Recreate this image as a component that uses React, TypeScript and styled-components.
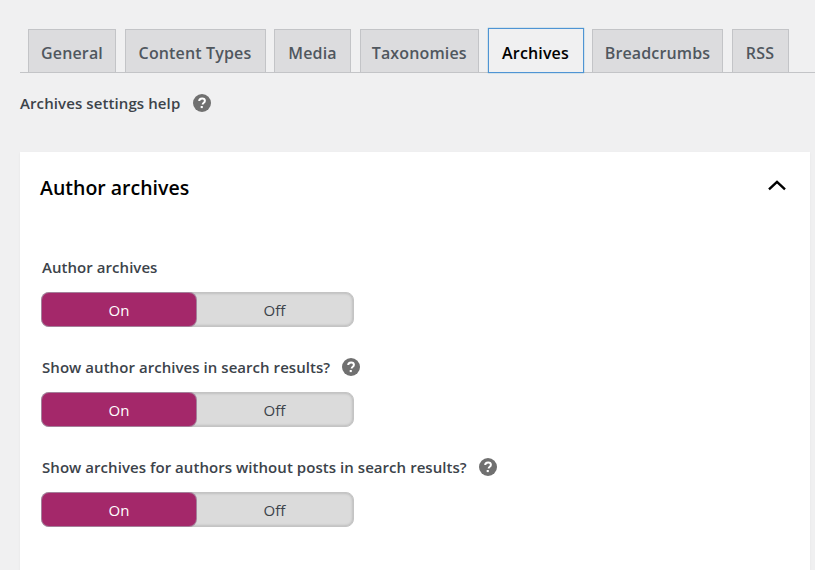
import React from "react";
import styled, { createGlobalStyle } from "styled-components";

const GlobalStyle = createGlobalStyle`
  html, body {
    margin: 0;
    padding: 0;
    background: #f0f0f1;
    overflow: hidden;
  }
  body {
    font-family: "Open Sans", "Noto Sans", "Liberation Sans", sans-serif;
  }
`;

const Page = styled.div`
  width: 815px;
  height: 570px;
  padding: 29px 5px 0 20px;
  box-sizing: border-box;
  overflow: hidden;
`;

const TabBar = styled.nav`
  display: flex;
  gap: 8.5px;
  padding-left: 8px;
  margin-right: -5px;
  height: 44px;
  box-sizing: border-box;
  border-bottom: 1px solid #c3c4c7;
`;

const Tab = styled.a<{ $active?: boolean; $width: number }>`
  display: flex;
  align-items: center;
  justify-content: center;
  box-sizing: border-box;
  width: ${(p) => p.$width}px;
  height: ${(p) => (p.$active ? 45 : 43)}px;
  margin-top: ${(p) => (p.$active ? -1 : 0)}px;
  padding-top: ${(p) => (p.$active ? 4 : 3)}px;
  font-size: 16px;
  font-weight: 600;
  letter-spacing: 0.15px;
  color: ${(p) => (p.$active ? "#000" : "#50575e")};
  background: ${(p) => (p.$active ? "#f0f0f1" : "#dcdcde")};
  border: 1px solid ${(p) => (p.$active ? "#4f94d4" : "#c3c4c7")};
  border-bottom: ${(p) => (p.$active ? "1px solid #4f94d4" : "none")};
  box-shadow: ${(p) => (p.$active ? "0 0 1px rgba(30, 140, 190, 0.8)" : "none")};
`;

const HelpRow = styled.div`
  display: flex;
  align-items: center;
  gap: 13px;
  height: 20px;
  margin-top: 20px;
  font-size: 15px;
  font-weight: 600;
  letter-spacing: 0.1px;
  color: #3c434a;
`;

const HelpIcon = styled.svg`
  width: 18px;
  height: 18px;
  flex-shrink: 0;
`;

const Card = styled.section`
  margin-top: 39px;
  height: 430px;
  padding: 0 20px;
  background: #fff;
  box-shadow: 0 1px 2px rgba(0, 0, 0, 0.06);
`;

const CardHeader = styled.header`
  display: flex;
  align-items: center;
  justify-content: space-between;
  height: 72px;
  padding-right: 3px;
`;

const CardTitle = styled.h2`
  margin: 0 0 2px;
  font-size: 19.5px;
  font-weight: 600;
  color: #000;
`;

const Chevron = styled.svg`
  width: 20px;
  height: 12px;
  margin-bottom: 6px;
`;

const Fields = styled.div`
  display: flex;
  flex-direction: column;
  gap: 30px;
  padding: 33px 0 0 1px;
`;

const Field = styled.div`
  display: flex;
  flex-direction: column;
  gap: 15px;
`;

const FieldLabel = styled.div`
  display: flex;
  align-items: center;
  gap: 12px;
  height: 20px;
  margin-left: 1px;
  font-size: 15px;
  font-weight: 600;
  letter-spacing: 0.05px;
  color: #3c434a;
`;

const Toggle = styled.div`
  display: flex;
  width: 313px;
  height: 35px;
  box-sizing: border-box;
  border: 1px solid #c4c4c4;
  border-radius: 8px;
  background: #dbdbdb;
  box-shadow: inset 0 0 3px rgba(0, 0, 0, 0.25);
`;

const ToggleOption = styled.div<{ $on?: boolean }>`
  display: flex;
  align-items: center;
  justify-content: center;
  box-sizing: border-box;
  flex: ${(p) => (p.$on ? "0 0 154px" : "1")};
  font-size: 15px;
  color: ${(p) => (p.$on ? "#fff" : "#3c434a")};
  background: ${(p) => (p.$on ? "#a4286a" : "transparent")};
  border-radius: ${(p) => (p.$on ? "7px" : "0")};
  box-shadow: ${(p) => (p.$on ? "0 0 0 1px #a4809a" : "none")};
`;

function QuestionIcon() {
  return (
    <HelpIcon viewBox="0 0 18 18">
      <circle cx="9" cy="9" r="9" fill="#707070" />
      <path
        d="M6.2 7.1c0-1.7 1.2-2.7 2.9-2.7 1.7 0 2.8 1 2.8 2.4 0 1.1-.6 1.7-1.4 2.2-.6.4-.8.7-.8 1.3v.3"
        fill="none"
        stroke="#fff"
        strokeWidth="2"
      />
      <rect x="7.7" y="12" width="2.1" height="2.1" fill="#fff" />
    </HelpIcon>
  );
}

const tabs = [
  { name: "General", width: 88 },
  { name: "Content Types", width: 141 },
  { name: "Media", width: 77 },
  { name: "Taxonomies", width: 119.5 },
  { name: "Archives", width: 96, active: true },
  { name: "Breadcrumbs", width: 131 },
  { name: "RSS", width: 57 },
];

const fields = [
  { label: "Author archives", help: false },
  { label: "Show author archives in search results?", help: true },
  { label: "Show archives for authors without posts in search results?", help: true },
];

export default function App() {
  return (
    <Page>
      <GlobalStyle />
      <TabBar>
        {tabs.map((tab) => (
          <Tab key={tab.name} $active={tab.active} $width={tab.width}>
            {tab.name}
          </Tab>
        ))}
      </TabBar>
      <HelpRow>
        Archives settings help
        <QuestionIcon />
      </HelpRow>
      <Card>
        <CardHeader>
          <CardTitle>Author archives</CardTitle>
          <Chevron viewBox="0 0 20 12">
            <path d="M2 10.4 10 2.8 18 10.4" fill="none" stroke="#000" strokeWidth="2.4" />
          </Chevron>
        </CardHeader>
        <Fields>
          {fields.map((field) => (
            <Field key={field.label}>
              <FieldLabel>
                {field.label}
                {field.help && <QuestionIcon />}
              </FieldLabel>
              <Toggle>
                <ToggleOption $on>On</ToggleOption>
                <ToggleOption>Off</ToggleOption>
              </Toggle>
            </Field>
          ))}
        </Fields>
      </Card>
    </Page>
  );
}
